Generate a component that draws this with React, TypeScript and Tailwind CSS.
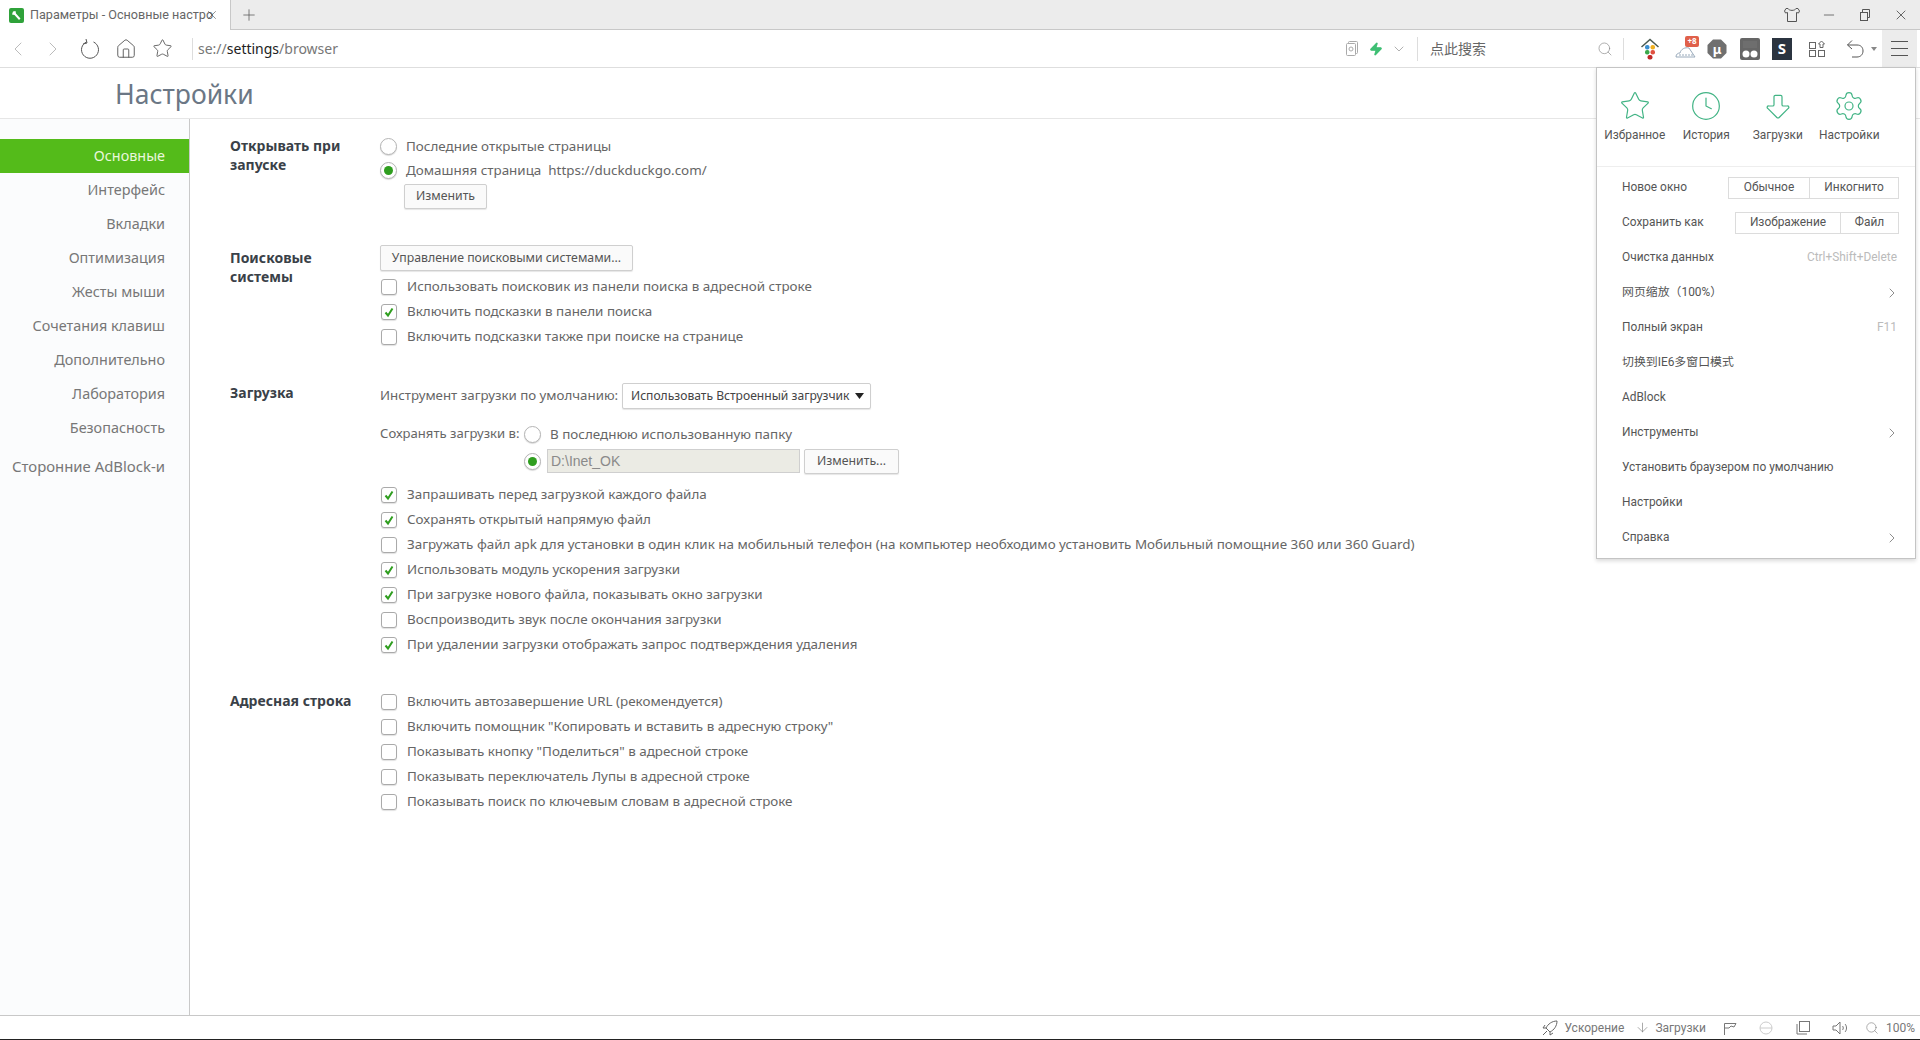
import React from "react";
import { Star, Clock, ArrowBigDown, Settings, ChevronRight, ChevronLeft, ChevronDown, Search, Minus, X, Plus, Zap, ArrowDown, House } from "lucide-react";

const Radio = ({ on }: { on?: boolean }) => (
  <span className="flex h-[17px] w-[17px] shrink-0 items-center justify-center rounded-full border border-[#b5b5b5] bg-white shadow-[0_1px_1px_rgba(0,0,0,0.15)]">
    {on && <span className="h-[9px] w-[9px] rounded-full bg-[#2f9e1f]" />}
  </span>
);

const Check = ({ on }: { on?: boolean }) => (
  <span className="ml-px flex h-[16px] w-[16px] shrink-0 items-center justify-center rounded-[3px] border border-[#aaaaaa] bg-white shadow-[0_1px_1px_rgba(0,0,0,0.12)]">
    {on && (
      <svg width="12" height="12" viewBox="0 0 12 12" fill="none">
        <path d="M2.5 6.5 L5 9.5 L9.5 2.5" stroke="#2f9e1f" strokeWidth="2" />
      </svg>
    )}
  </span>
);

const Row = ({ on, children }: { on?: boolean; children: React.ReactNode }) => (
  <div className="flex h-[25px] items-center gap-[10px] whitespace-nowrap">
    <Check on={on} />
    <span>{children}</span>
  </div>
);

const Btn = ({ className, children }: { className: string; children: React.ReactNode }) => (
  <div className={"flex items-center justify-center whitespace-nowrap rounded-[2px] border border-[#cfcfcf] bg-[#fafafa] text-[12.3px] text-[#555] shadow-[0_1px_1px_rgba(0,0,0,0.1)] " + className}>
    {children}
  </div>
);

const side = ["Интерфейс", "Вкладки", "Оптимизация", "Жесты мыши", "Сочетания клавиш", "Дополнительно", "Лаборатория", "Безопасность"];

const MenuRow = ({ children, right, arrow }: { children: React.ReactNode; right?: string; arrow?: boolean }) => (
  <div className="flex h-[35px] items-center justify-between pl-[25px] pr-[18px] text-[#555]">
    <span>{children}</span>
    {right && <span className="text-[#bbbbbb]">{right}</span>}
    {arrow && <ChevronRight size={16} strokeWidth={1} className="text-[#555] -mr-[3px]" />}
  </div>
);

export default function App() {
  return (
    <div className="relative flex h-[1040px] w-[1920px] flex-col overflow-hidden bg-white font-['Noto_Sans','Noto_Sans_CJK_SC',sans-serif] text-[13.42px] text-[#666]">
      {/* Tab strip */}
      <div className="flex h-[30px] shrink-0 items-stretch border-b border-[#c8c8c8] bg-[#ececec]">
        <div className="-mb-px flex w-[231px] items-center border-r border-[#c8c8c8] bg-white pl-[9px]">
          <svg width="15" height="15" viewBox="0 0 15 15" className="shrink-0">
            <rect width="15" height="15" rx="2" fill="#2fa23a" />
            <path d="M4 3.5 L6.5 3 L7 5.5 L11.5 10.5 L10 12 L5.5 7 L3 6.5 Z" fill="#fff" />
          </svg>
          <span className="ml-[6px] w-[172px] whitespace-nowrap font-['Roboto','Noto_Sans',sans-serif] text-[12.6px] text-[#666]">Параметры - Основные настро</span>
          <X size={14} strokeWidth={1} className="ml-[3px] text-[#444]" />
        </div>
        <div className="ml-[9px] flex items-center">
          <Plus size={18} strokeWidth={1} className="text-[#555]" />
        </div>
        <div className="flex-1" />
        <div className="flex items-center pr-[11px]">
          <svg width="18" height="16" viewBox="0 0 18 16" fill="none" stroke="#555">
            <path d="M5 1.5 L3 1.5 L1.5 4 L2.5 6 L4.5 5.5 L4.5 14.5 L13.5 14.5 L13.5 5.5 L15.5 6 L16.5 4 L15 1.5 L13 1.5 C12 4 6 4 5 1.5 Z" />
          </svg>
          <Minus size={16} strokeWidth={1.2} className="ml-[20px] text-[#555]" />
          <svg width="12" height="12" viewBox="0 0 12 12" fill="none" stroke="#555" className="ml-[22px]">
            <rect x="1.5" y="3.5" width="7" height="8" />
            <path d="M3.5 3.5 V0.5 H10.5 V8.5 H8.5" />
          </svg>
          <X size={16} strokeWidth={1.2} className="ml-[22px] text-[#444]" />
        </div>
      </div>

      {/* Toolbar */}
      <div className="flex h-[38px] shrink-0 items-center border-b border-[#dedede] bg-white">
        <ChevronLeft size={24} strokeWidth={1} className="ml-[6px] text-[#bbb]" />
        <ChevronRight size={24} strokeWidth={1} className="ml-[11px] text-[#bbb]" />
        <svg width="20" height="22" viewBox="0 0 20 22" fill="none" stroke="#555" className="ml-[15px]">
          <path d="M6.5 4 A8.5 8.5 0 1 0 13.5 4 M6 1 L7 5 L3 6" strokeWidth="1" />
        </svg>
        <House size={22} strokeWidth={1} className="ml-[15px] text-[#555]" />
        <Star size={21} strokeWidth={1} className="ml-[15px] text-[#555]" />
        <div className="ml-[19px] h-[22px] w-px bg-[#ddd]" />
        <div className="ml-[5px] w-[1137px] whitespace-nowrap text-[14px] text-[#777]">
          se://<span className="text-[#222]">settings</span>/browser
        </div>
        <svg width="14" height="16" viewBox="0 0 14 16" fill="none" stroke="#aaa" className="ml-[10px]">
          <rect x="3.5" y="0.5" width="9" height="12" rx="1" />
          <rect x="1.5" y="2.5" width="9" height="12" rx="1" fill="#fff" />
          <circle cx="6" cy="8" r="2" />
        </svg>
        <Zap size={14} fill="#3fbf74" stroke="#3fbf74" className="ml-[10px]" />
        <ChevronDown size={16} strokeWidth={1} className="ml-[8px] text-[#888]" />
        <div className="ml-[10px] h-[24px] w-px bg-[#ddd]" />
        <div className="ml-[12px] w-[167px] whitespace-nowrap text-[14px] text-[#666]">点此搜索</div>
        <Search size={16} strokeWidth={1} className="text-[#888]" />
        <div className="ml-[10px] h-[22px] w-px bg-[#ddd]" />
        <svg width="20" height="22" viewBox="0 0 20 22" className="ml-[16px]">
          <path d="M1.5 9 L10 1.5 L18.5 9" fill="none" stroke="#4a5a50" strokeWidth="1.5" />
          <rect x="5" y="7" width="4.5" height="4.5" rx="2" fill="#3a8fd0" />
          <rect x="10.5" y="7" width="4.5" height="4.5" rx="2" fill="#f0b020" />
          <rect x="5" y="12" width="4.5" height="4.5" rx="2" fill="#3aa84a" />
          <rect x="10.5" y="12" width="4.5" height="4.5" rx="2" fill="#e05040" />
          <rect x="7.5" y="17" width="5" height="4.5" rx="2" fill="#c02828" />
        </svg>
        <div className="relative ml-[15px] h-[24px] w-[24px]">
          <svg width="24" height="24" viewBox="0 0 24 24" fill="none" stroke="#9ab" className="absolute left-0 top-0">
            <path d="M1 20 C1 17 3 16 5 16 C6 12 10 10 14 11 L20 20 Z" />
            <path d="M4 18 H18" strokeDasharray="2 1" />
          </svg>
          <span className="absolute -top-[1px] left-[10px] flex h-[11px] w-[14px] items-center justify-center rounded-[2px] bg-[#e0604a] text-[8px] font-bold leading-none text-white">+8</span>
        </div>
        <svg width="20" height="20" viewBox="0 0 20 20" className="ml-[8px]">
          <path d="M6 0.5 H14 L19.5 6 V14 L14 19.5 H6 L0.5 14 V6 Z" fill="#6f6f6f" />
          <text x="10" y="14.5" textAnchor="middle" fontSize="13" fontWeight="700" fill="#fff" fontFamily="Noto Sans">μ</text>
        </svg>
        <svg width="20" height="22" viewBox="0 0 20 22" className="ml-[13px]">
          <rect width="20" height="22" rx="2" fill="#666" />
          <rect x="3" y="3" width="14" height="7" fill="#6e6e6e" />
          <circle cx="6" cy="16" r="3.5" fill="#fff" />
          <circle cx="14" cy="16" r="3.5" fill="#fff" />
        </svg>
        <span className="ml-[12px] flex h-[22px] w-[20px] items-center justify-center bg-[#2b3440] text-[15px] font-bold leading-none text-white">S</span>
        <svg width="18" height="18" viewBox="0 0 18 18" fill="none" stroke="#666" className="ml-[16px]">
          <rect x="1.5" y="2.5" width="6" height="6" />
          <rect x="1.5" y="10.5" width="6" height="6" />
          <rect x="10.5" y="10.5" width="6" height="6" />
          <path d="M13.5 1 L16.5 4 L15 4 V7.5 H12 V4 L10.5 4 Z" />
        </svg>
        <svg width="20" height="20" viewBox="0 0 20 20" fill="none" stroke="#555" className="ml-[20px]">
          <path d="M6 1.5 L1.5 6 L6 10 M1.5 6 H11 C15 6 17 8.5 17 12 C17 15.5 14.5 18 11 18 H6" />
        </svg>
        <svg width="6" height="4" viewBox="0 0 6 4" className="ml-[5px]">
          <path d="M0 0 H6 L3 4 Z" fill="#888" />
        </svg>
        <div className="ml-[5px] flex h-[37px] w-[35px] flex-col items-center justify-center gap-[6px] bg-[#ececec]">
          <span className="h-px w-[17px] bg-[#555]" />
          <span className="h-px w-[17px] bg-[#555]" />
          <span className="h-px w-[17px] bg-[#555]" />
        </div>
      </div>

      {/* Page title */}
      <div className="flex h-[51px] shrink-0 items-center border-b border-[#e6e6e6] pl-[115px] pt-[4px] text-[26.5px] text-[#6b7785]">
        Настройки
      </div>

      {/* Body */}
      <div className="flex min-h-0 flex-1">
        <nav className="w-[190px] shrink-0 border-r border-[#c9c9c9] bg-[#fbfcfd] pt-[20px] text-right text-[14.4px] text-[#777]">
          <div className="flex h-[34px] items-center justify-end bg-[#54bb1a] pr-[24px] text-[#e9f7dc]">Основные</div>
          {side.map((s) => (
            <div key={s} className="flex h-[34px] items-center justify-end pr-[24px]">{s}</div>
          ))}
          <div className="mt-[4px] flex h-[34px] items-center justify-end whitespace-nowrap pr-[24px] text-[14.9px]">Сторонние AdBlock-и</div>
        </nav>

        <main className="flex-1 pl-[40px] pt-[15px]">
          {/* Section 1 */}
          <section className="flex">
            <h3 className="w-[150px] shrink-0 pt-[2px] text-[14px] font-bold leading-[19px] text-[#3a4148]">Открывать при<br />запуске</h3>
            <div>
              <div className="flex h-[24px] items-center gap-[9px]"><Radio /><span>Последние открытые страницы</span></div>
              <div className="flex h-[24px] items-center gap-[9px]"><Radio on /><span>Домашняя страница&nbsp;&nbsp;https://duckduckgo.com/</span></div>
              <Btn className="ml-[24px] mt-[2px] h-[25px] w-[83px]">Изменить</Btn>
            </div>
          </section>

          {/* Section 2 */}
          <section className="mt-[36px] flex">
            <h3 className="w-[150px] shrink-0 pt-[3px] text-[14px] font-bold leading-[19px] text-[#3a4148]">Поисковые<br />системы</h3>
            <div>
              <Btn className="mb-[3px] h-[26px] w-[253px]">Управление поисковыми системами...</Btn>
              <Row>Использовать поисковик из панели поиска в адресной строке</Row>
              <Row on>Включить подсказки в панели поиска</Row>
              <Row>Включить подсказки также при поиске на странице</Row>
            </div>
          </section>

          {/* Section 3 */}
          <section className="mt-[34px] flex">
            <h3 className="w-[150px] shrink-0 text-[14px] font-bold leading-[19px] text-[#3a4148]">Загрузка</h3>
            <div>
              <div className="flex h-[26px] items-center">
                <span className="w-[242px] whitespace-nowrap text-[13.3px]">Инструмент загрузки по умолчанию:</span>
                <div className="flex h-[26px] w-[249px] items-center justify-between rounded-[2px] border border-[#cfcfcf] bg-white pl-[8px] pr-[6px] text-[12.1px] text-[#444] shadow-[0_1px_1px_rgba(0,0,0,0.1)]">
                  <span className="whitespace-nowrap">Использовать Встроенный загрузчик</span>
                  <svg width="9" height="6" viewBox="0 0 9 6" className="shrink-0"><path d="M0 0 H9 L4.5 6 Z" fill="#222" /></svg>
                </div>
              </div>
              <div className="mt-[13px] flex h-[24px] items-center">
                <span className="w-[144px] whitespace-nowrap text-[13.1px]">Сохранять загрузки в:</span>
                <Radio />
                <span className="ml-[9px]">В последнюю использованную папку</span>
              </div>
              <div className="mt-[3px] flex h-[24px] items-center pl-[144px]">
                <Radio on />
                <div className="ml-[6px] flex h-[24px] w-[253px] items-center border border-[#cfcfcf] bg-[#ebebe4] pl-[3px] font-['Liberation_Sans',sans-serif] text-[14px] text-[#8a8a8a]">D:\Inet_OK</div>
                <Btn className="ml-[4px] h-[25px] w-[95px]">Изменить...</Btn>
              </div>
              <div className="mt-[9px]">
                <Row on>Запрашивать перед загрузкой каждого файла</Row>
                <Row on>Сохранять открытый напрямую файл</Row>
                <Row>Загружать файл apk для установки в один клик на мобильный телефон (на компьютер необходимо установить Мобильный помощние 360 или 360 Guard)</Row>
                <Row on>Использовать модуль ускорения загрузки</Row>
                <Row on>При загрузке нового файла, показывать окно загрузки</Row>
                <Row>Воспроизводить звук после окончания загрузки</Row>
                <Row on>При удалении загрузки отображать запрос подтверждения удаления</Row>
              </div>
            </div>
          </section>

          {/* Section 4 */}
          <section className="mt-[32px] flex">
            <h3 className="w-[150px] shrink-0 pt-[2px] text-[14px] font-bold leading-[19px] text-[#3a4148]">Адресная строка</h3>
            <div>
              <Row>Включить автозавершение URL (рекомендуется)</Row>
              <Row>Включить помощник "Копировать и вставить в адресную строку"</Row>
              <Row>Показывать кнопку "Поделиться" в адресной строке</Row>
              <Row>Показывать переключатель Лупы в адресной строке</Row>
              <Row>Показывать поиск по ключевым словам в адресной строке</Row>
            </div>
          </section>
        </main>
      </div>

      {/* Status bar */}
      <div className="flex h-[25px] shrink-0 items-center justify-end border-b border-b-[#222] border-t border-t-[#c8c8c8] bg-white pr-[5px] font-['Roboto','Noto_Sans',sans-serif] text-[12px] text-[#777]">
        <svg width="16" height="16" viewBox="0 0 16 16" fill="none" stroke="#666">
          <path d="M15 1 C10 1 6 4 4 8 L8 12 C12 10 15 6 15 1 Z" />
          <path d="M1 15 L5 11 M4 8 H1 L3 5 M8 12 V15 L11 13" />
        </svg>
        <span className="ml-[6px]">Ускорение</span>
        <ArrowDown size={15} strokeWidth={1} className="ml-[11px] text-[#777]" />
        <span className="ml-[5px]">Загрузки</span>
        <svg width="14" height="14" viewBox="0 0 14 14" fill="none" stroke="#777" className="ml-[17px]">
          <path d="M1.5 14 V2.5 H13 L11 6 L8 5 L6 7 H1.5" />
        </svg>
        <svg width="16" height="16" viewBox="0 0 16 16" fill="none" stroke="#ccc" className="ml-[21px]">
          <circle cx="8" cy="8" r="6" />
          <path d="M2 8 H14" />
        </svg>
        <svg width="14" height="14" viewBox="0 0 14 14" fill="none" stroke="#777" className="ml-[22px]">
          <rect x="3.5" y="0.5" width="10" height="10" />
          <path d="M1 3 V13 H11" />
        </svg>
        <svg width="16" height="14" viewBox="0 0 16 14" fill="none" stroke="#777" className="ml-[22px]">
          <path d="M1 5 H4 L8 1 V13 L4 9 H1 Z" />
          <path d="M10.5 5 C11.5 6 11.5 8 10.5 9 M13 3 C15 5 15 9 13 11" />
        </svg>
        <Search size={14} strokeWidth={1} className="ml-[17px] text-[#777]" />
        <span className="ml-[7px] text-[12px]">100%</span>
      </div>

      {/* Dropdown menu */}
      <div className="absolute left-[1596px] top-[67px] h-[492px] w-[320px] border border-[#c4c4c4] bg-white font-['Roboto','Noto_Sans_CJK_SC',sans-serif] text-[11.9px] shadow-[0_2px_4px_rgba(0,0,0,0.15)]">
        <div className="flex h-[99px] border-b border-[#eeeeee] pl-[2px] text-[#555]">
          {[
            [Star, "Избранное"],
            [Clock, "История"],
            [ArrowBigDown, "Загрузки"],
            [Settings, "Настройки"],
          ].map(([Icon, label]: any) => (
            <div key={label} className="flex w-[71.5px] flex-col items-center pt-[22px]">
              <Icon size={32} strokeWidth={0.9} className="text-[#42b485]" />
              <span className="mt-[5px] whitespace-nowrap">{label}</span>
            </div>
          ))}
        </div>
        <div className="pt-[3px]">
          <div className="flex h-[35px] items-center justify-between pl-[25px] pr-[16px] text-[#555]">
            <span>Новое окно</span>
            <div className="flex h-[22px] w-[171px] border border-[#dcdcdc]">
              <span className="flex w-[81px] items-center justify-center border-r border-[#dcdcdc]">Обычное</span>
              <span className="flex flex-1 items-center justify-center">Инкогнито</span>
            </div>
          </div>
          <div className="flex h-[35px] items-center justify-between pl-[25px] pr-[16px] text-[#555]">
            <span>Сохранить как</span>
            <div className="flex h-[22px] w-[164px] border border-[#dcdcdc]">
              <span className="flex w-[105px] items-center justify-center border-r border-[#dcdcdc]">Изображение</span>
              <span className="flex flex-1 items-center justify-center">Файл</span>
            </div>
          </div>
          <MenuRow right="Ctrl+Shift+Delete">Очистка данных</MenuRow>
          <MenuRow arrow>网页缩放（100%）</MenuRow>
          <MenuRow right="F11">Полный экран</MenuRow>
          <MenuRow>切换到IE6多窗口模式</MenuRow>
          <MenuRow>AdBlock</MenuRow>
          <MenuRow arrow>Инструменты</MenuRow>
          <MenuRow>Установить браузером по умолчанию</MenuRow>
          <MenuRow>Настройки</MenuRow>
          <MenuRow arrow>Справка</MenuRow>
        </div>
      </div>
    </div>
  );
}
